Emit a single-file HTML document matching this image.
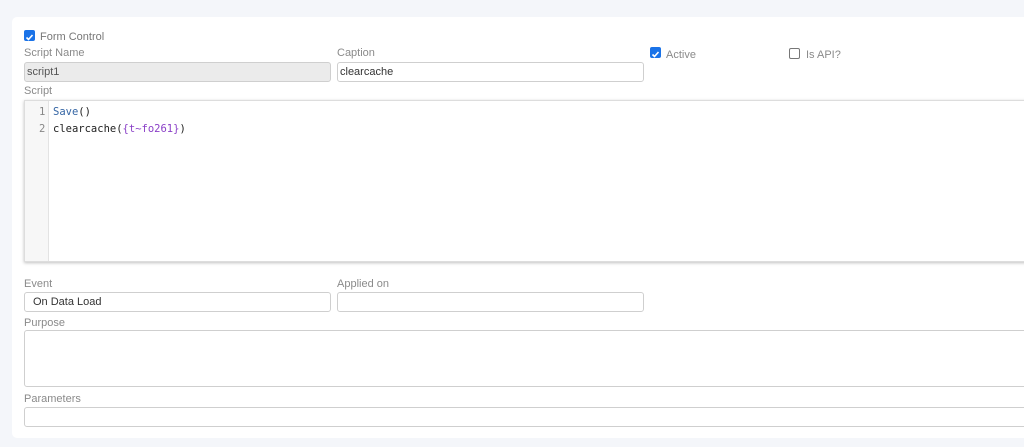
<!DOCTYPE html>
<html><head><style>
body{margin:0;width:1024px;height:447px;background:#f4f6fa;font-family:"Liberation Sans",sans-serif;overflow:hidden;position:relative}
.card{position:absolute;left:12px;top:17px;width:1020px;height:421px;background:#fff;border-radius:5px}
.lbl{position:absolute;font-size:11px;color:#8a8a8a}
.inp{position:absolute;height:20px;border:1px solid #cfcfcf;border-radius:3px;background:#fff;font-size:11px;color:#333;line-height:18px;box-sizing:border-box;padding-left:2px}
.cb{position:absolute;width:11px;height:11px;border-radius:2px}
.on{background:#1a73e8}
.off{border:1px solid #777;box-sizing:border-box}
.ed{position:absolute;left:24px;top:100px;width:1010px;height:160px;border:1px solid #ddd;box-shadow:0 1px 3px rgba(0,0,0,.25);background:#fff}
.gut{position:absolute;left:0;top:0;width:23px;height:100%;background:#f7f7f7;border-right:1px solid #e3e3e3}
.code{position:absolute;font-family:"DejaVu Sans Mono","Liberation Mono",monospace;font-size:10.5px;color:#222}
.ln{color:#888}
</style></head><body>
<div class="card"></div>
<div class="cb on" style="left:24px;top:30px"><svg width="11" height="11"><path d="M2.5 5.5l2 2L8.5 3" stroke="#fff" stroke-width="1.6" fill="none"/></svg></div>
<div class="lbl" style="left:40px;top:31px;color:#777">Form Control</div>
<div class="lbl" style="left:24px;top:47px">Script Name</div>
<div class="inp" style="left:24px;top:62px;width:307px;background:#ebebeb;color:#555">script1</div>
<div class="lbl" style="left:337px;top:47px">Caption</div>
<div class="inp" style="left:337px;top:62px;width:307px">clearcache</div>
<div class="cb on" style="left:650px;top:47px"><svg width="11" height="11"><path d="M2.5 5.5l2 2L8.5 3" stroke="#fff" stroke-width="1.6" fill="none"/></svg></div>
<div class="lbl" style="left:666px;top:49px">Active</div>
<div class="cb off" style="left:789px;top:48px"></div>
<div class="lbl" style="left:806px;top:49px">Is API?</div>
<div class="lbl" style="left:24px;top:85px">Script</div>
<div class="ed"><div class="gut"></div>
<div class="code" style="left:14px;top:5px"><span class="ln">1</span></div>
<div class="code" style="left:28px;top:5px"><span style="color:#3465a4">Save</span>()</div>
<div class="code" style="left:14px;top:22px"><span class="ln">2</span></div>
<div class="code" style="left:28px;top:22px">clearcache(<span style="color:#8a3fc7">{t~fo261}</span>)</div>
</div>
<div class="lbl" style="left:24px;top:278px">Event</div>
<div class="inp" style="left:24px;top:292px;width:307px;padding-left:8px">On Data Load</div>
<div class="lbl" style="left:337px;top:278px">Applied on</div>
<div class="inp" style="left:337px;top:292px;width:307px"></div>
<div class="lbl" style="left:24px;top:317px">Purpose</div>
<div class="inp" style="left:24px;top:330px;width:1010px;height:57px"></div>
<div class="lbl" style="left:24px;top:393px">Parameters</div>
<div class="inp" style="left:24px;top:407px;width:1010px;height:20px"></div>
</body></html>
